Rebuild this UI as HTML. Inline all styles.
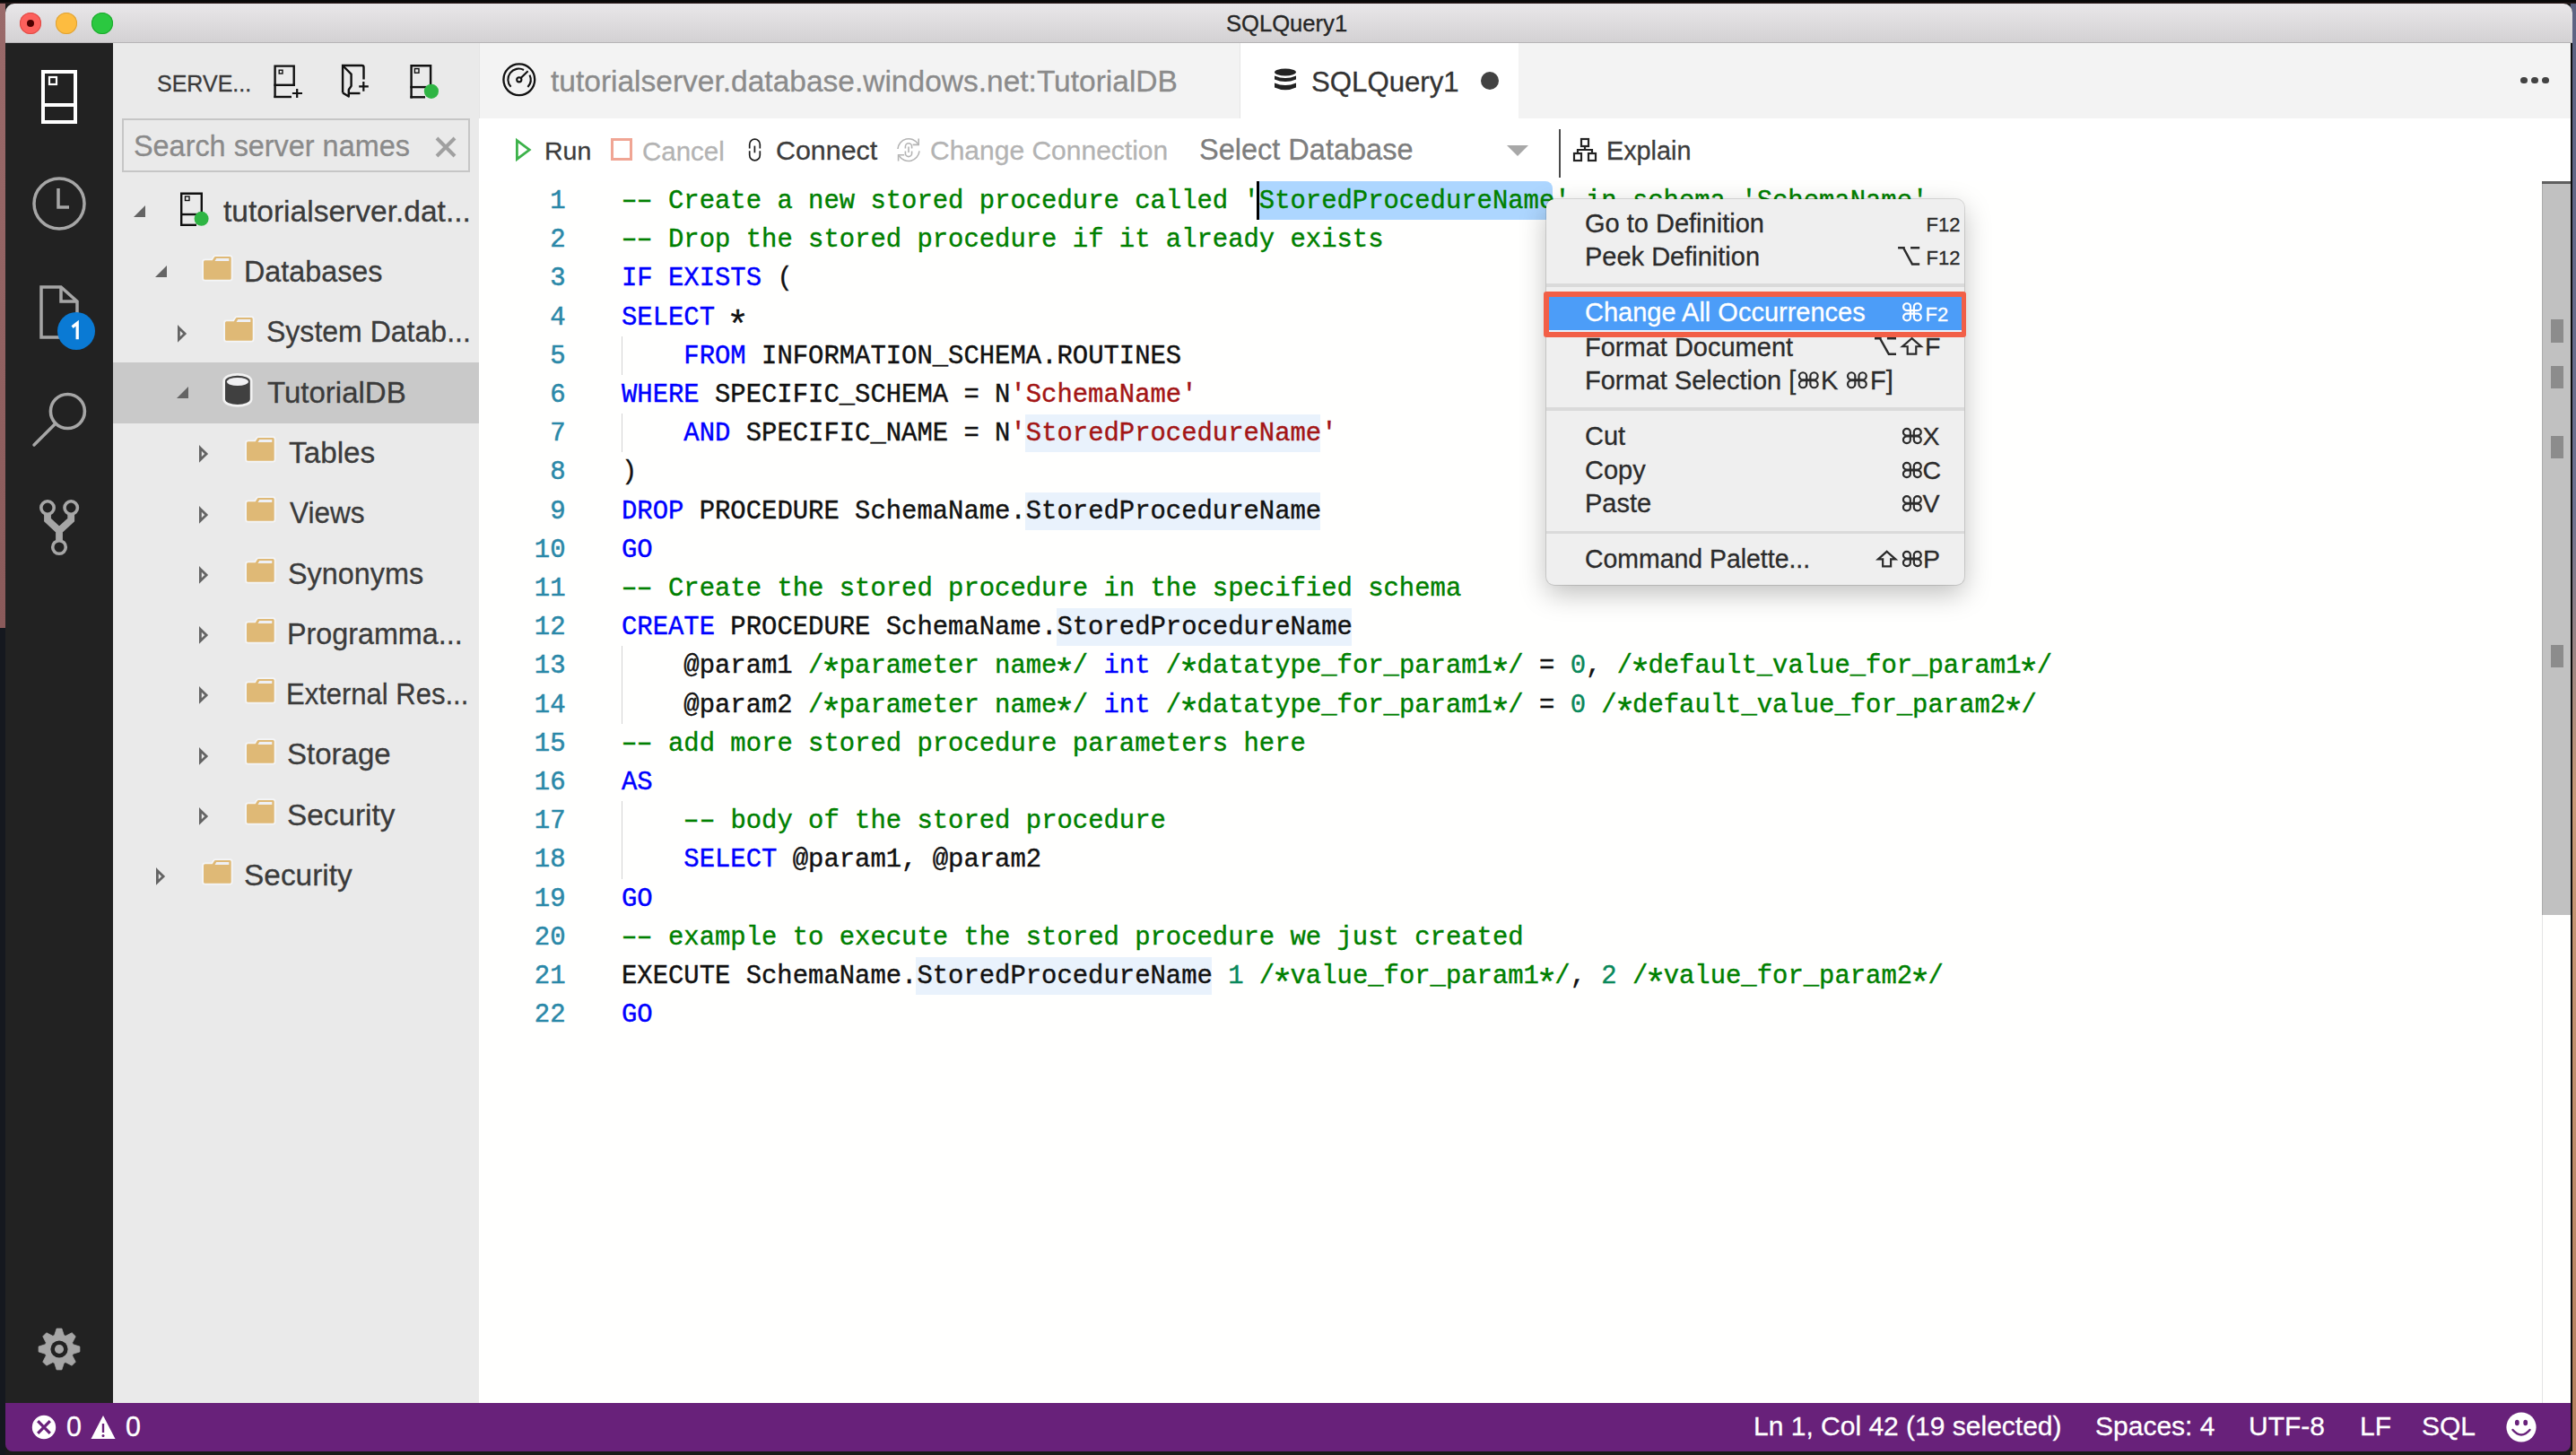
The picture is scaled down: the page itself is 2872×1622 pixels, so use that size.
<!DOCTYPE html>
<html><head><meta charset="utf-8"><title>SQLQuery1</title>
<style>
html,body{margin:0;padding:0;width:2872px;height:1622px;overflow:hidden;background:#1a1a1a}
.r{position:absolute;display:block}
.t{position:absolute;white-space:pre;font-family:"Liberation Sans", sans-serif}
.code{-webkit-text-stroke:0.4px currentColor}
.ln{-webkit-text-stroke:0.5px currentColor}
.ui{-webkit-text-stroke:0.3px currentColor}
.code span{-webkit-text-stroke:0.4px}
.code .hy{display:inline-block;transform:scaleX(1.6)}
.code .ast{display:inline-block;transform:translateY(10.5px) scale(1.45);-webkit-text-stroke:0.2px}
svg.r{overflow:visible}
</style></head><body>
<div class="r" style="left:0px;top:0px;width:2872px;height:1622px;background:#1a1a1a;"></div>
<div class="r" style="left:0px;top:0px;width:6px;height:700px;background:linear-gradient(#9a6a6a,#8a5a5a);"></div>
<div class="r" style="left:0px;top:700px;width:6px;height:922px;background:#15181f;"></div>
<div class="r" style="left:2866px;top:0px;width:6px;height:1622px;background:linear-gradient(#5c6282 0%,#6e7290 35%,#c99a78 55%,#b5805e 100%);"></div>
<div class="r" style="left:0px;top:0px;width:2872px;height:4px;background:linear-gradient(#080808 0%,#080808 55%,#3a2424 100%);"></div>
<div class="r" style="left:6px;top:4px;width:2862px;height:1614px;background:#222;border-radius:10px 10px 8px 8px;overflow:hidden"></div>
<div class="r" style="left:6px;top:4px;width:2862px;height:44px;background:linear-gradient(#e9e7e9,#d3d1d3);border-radius:10px 10px 0 0;box-shadow:inset 0 -1px 0 #b6b4b6"></div>
<div class="r" style="left:22px;top:14px;width:24px;height:24px;border-radius:50%;background:#fc605c;box-shadow:inset 0 0 0 1px #df4b45"></div>
<div class="r" style="left:62px;top:14px;width:24px;height:24px;border-radius:50%;background:#fdbc40;box-shadow:inset 0 0 0 1px #dea236"></div>
<div class="r" style="left:102px;top:14px;width:24px;height:24px;border-radius:50%;background:#2bc840;box-shadow:inset 0 0 0 1px #1ca92c"></div>
<div class="r" style="left:30px;top:22px;width:8px;height:8px;border-radius:50%;background:#4d0000"></div>
<div class="t ui" style="left:1367.00px;top:14.32px;font-size:25.6px;line-height:25.6px;color:#262626;font-family:'Liberation Sans', sans-serif;">SQLQuery1</div>
<div class="r" style="left:6px;top:48px;width:120px;height:1516px;background:#222222;"></div>
<svg class="r" style="left:40px;top:72px" width="52" height="72" viewBox="0 0 52 72"><rect x="8" y="8" width="36" height="56" fill="none" stroke="#fff" stroke-width="4"/><line x1="8" y1="45" x2="44" y2="45" stroke="#fff" stroke-width="4"/><rect x="15" y="14" width="8" height="8" fill="none" stroke="#fff" stroke-width="2.2"/></svg>
<svg class="r" style="left:34px;top:195px" width="64" height="64" viewBox="0 0 64 64"><circle cx="32" cy="32" r="28" fill="none" stroke="#a6a6a6" stroke-width="3.5"/><path d="M31 15 V36 H43" fill="none" stroke="#a6a6a6" stroke-width="3.5"/></svg>
<svg class="r" style="left:40px;top:314px" width="52" height="70" viewBox="0 0 52 70"><path d="M6 6 H28 L46 22 V62 H6 Z" fill="none" stroke="#a6a6a6" stroke-width="3.5"/><path d="M28 6 V22 H46" fill="none" stroke="#a6a6a6" stroke-width="3.5"/></svg>
<div class="r" style="left:64px;top:348px;width:42px;height:42px;border-radius:50%;background:#0a7ad4"></div>
<svg class="r" style="left:70px;top:350px" width="30" height="35" viewBox="70 350 30 35"><path d="M80.6 364.6 L86.2 360.2 V378.3" fill="none" stroke="#fff" stroke-width="3.3" stroke-linejoin="miter"/></svg>
<svg class="r" style="left:30px;top:435px" width="70" height="70" viewBox="0 0 70 70"><circle cx="45.4" cy="23.5" r="19" fill="none" stroke="#a6a6a6" stroke-width="3.6"/><line x1="8" y1="61" x2="32" y2="37" stroke="#a6a6a6" stroke-width="3.5" stroke-linecap="round"/></svg>
<svg class="r" style="left:30px;top:545px" width="70" height="85" viewBox="30 545 70 85"><g fill="none" stroke="#a6a6a6"><circle cx="53" cy="566" r="7.2" stroke-width="3.6"/><circle cx="79.2" cy="566" r="7.2" stroke-width="3.6"/><circle cx="66" cy="610" r="7.3" stroke-width="3.6"/><path d="M53 572.5 V579.6 L66 591.6 L79.2 579.6 V572.5 M66 591 V603" stroke-width="7.8" stroke-linejoin="miter"/></g></svg>
<svg class="r" style="left:34px;top:1472px" width="64" height="64" viewBox="0 0 64 64"><g transform="translate(32,32)"><polygon points="-5.31,-15.41 -2.90,-22.92 2.90,-22.92 5.31,-15.41 7.15,-14.65 14.16,-18.25 18.25,-14.16 14.65,-7.15 15.41,-5.31 22.92,-2.90 22.92,2.90 15.41,5.31 14.65,7.15 18.25,14.16 14.16,18.25 7.15,14.65 5.31,15.41 2.90,22.92 -2.90,22.92 -5.31,15.41 -7.15,14.65 -14.16,18.25 -18.25,14.16 -14.65,7.15 -15.41,5.31 -22.92,2.90 -22.92,-2.90 -15.41,-5.31 -14.65,-7.15 -18.25,-14.16 -14.16,-18.25 -7.15,-14.65" fill="#a6a6a6" stroke="#a6a6a6" stroke-width="0.8" stroke-linejoin="round"/><circle r="9.6" fill="#222"/><circle r="5.05" fill="#a6a6a6"/></g></svg>
<div class="r" style="left:126px;top:48px;width:408px;height:1516px;background:#eaeaea;"></div>
<div class="t ui" style="left:175.00px;top:80.83px;font-size:25px;line-height:25px;color:#3a3a3a;font-family:'Liberation Sans', sans-serif;">SERVE...</div>
<div class="r" style="left:136px;top:132px;width:388px;height:60px;background:#eaeaea;box-shadow:inset 0 0 0 2px #c6c6c6"></div>
<div class="t ui" style="left:149.00px;top:146.57px;font-size:32.4px;line-height:32.4px;color:#8a8a8a;font-family:'Liberation Sans', sans-serif;">Search server names</div>
<svg class="r" style="left:484px;top:151px" width="26" height="26" viewBox="0 0 26 26"><path d="M3 3 L23 23 M23 3 L3 23" stroke="#a0a0a0" stroke-width="4"/></svg>
<div class="r" style="left:126px;top:404px;width:408px;height:68px;background:#c9c9c9;"></div>
<svg class="r" style="left:148px;top:228px" width="16" height="16" viewBox="0 0 16 16"><path d="M14 1 V14 H1 Z" fill="#646464"/></svg>
<svg class="r" style="left:195px;top:208px" width="50" height="50" viewBox="0 0 50 50"><g fill="none" stroke="#111" stroke-width="2.4"><path d="M7.2 42.8 V7.7 H29.8 V31"/><path d="M6 31 H31"/><path d="M6 42.8 H24"/><rect x="11.5" y="11" width="4.5" height="4.5" stroke-width="1.4"/></g><circle cx="29.6" cy="35.8" r="8" fill="#2fb544"/></svg>
<div class="t ui" style="left:249.00px;top:219.73px;font-size:32.8px;line-height:32.8px;color:#3b3b3b;font-family:'Liberation Sans', sans-serif;transform:scaleX(1.0225);transform-origin:0 0">tutorialserver.dat...</div>
<svg class="r" style="left:172px;top:295px" width="16" height="16" viewBox="0 0 16 16"><path d="M14 1 V14 H1 Z" fill="#646464"/></svg>
<svg class="r" style="left:226px;top:285px" width="34" height="30" viewBox="0 0 34 30"><path d="M1 6.8 Q1 5.3 2.5 5.3 H10.8 L12.6 2.2 Q13.2 1 14.5 1 H30.2 Q31.7 1 31.7 2.5 V25.3 Q31.7 26.8 30.2 26.8 H2.5 Q1 26.8 1 25.3 Z" fill="#f4f5f7" stroke="#f4f5f7" stroke-width="3.6" stroke-linejoin="round"/><path d="M1 6.8 Q1 5.3 2.5 5.3 H10.8 L12.6 2.2 Q13.2 1 14.5 1 H30.2 Q31.7 1 31.7 2.5 V25.3 Q31.7 26.8 30.2 26.8 H2.5 Q1 26.8 1 25.3 Z" fill="#dfb976"/><path d="M15.2 3 H29.3 V5.9 H13.6 Z" fill="#eef0f5"/></svg>
<div class="t ui" style="left:272.00px;top:287.03px;font-size:32.8px;line-height:32.8px;color:#3b3b3b;font-family:'Liberation Sans', sans-serif;transform:scaleX(0.985);transform-origin:0 0">Databases</div>
<svg class="r" style="left:198px;top:358px" width="14" height="26" viewBox="0 0 14 26"><path d="M1.4 7.4 L8.1 13.9 L1.4 20.4 Z" fill="none" stroke="#646464" stroke-width="2.8" stroke-linejoin="miter"/></svg>
<svg class="r" style="left:250px;top:353px" width="34" height="30" viewBox="0 0 34 30"><path d="M1 6.8 Q1 5.3 2.5 5.3 H10.8 L12.6 2.2 Q13.2 1 14.5 1 H30.2 Q31.7 1 31.7 2.5 V25.3 Q31.7 26.8 30.2 26.8 H2.5 Q1 26.8 1 25.3 Z" fill="#f4f5f7" stroke="#f4f5f7" stroke-width="3.6" stroke-linejoin="round"/><path d="M1 6.8 Q1 5.3 2.5 5.3 H10.8 L12.6 2.2 Q13.2 1 14.5 1 H30.2 Q31.7 1 31.7 2.5 V25.3 Q31.7 26.8 30.2 26.8 H2.5 Q1 26.8 1 25.3 Z" fill="#dfb976"/><path d="M15.2 3 H29.3 V5.9 H13.6 Z" fill="#eef0f5"/></svg>
<div class="t ui" style="left:297.00px;top:354.33px;font-size:32.8px;line-height:32.8px;color:#3b3b3b;font-family:'Liberation Sans', sans-serif;transform:scaleX(0.9765);transform-origin:0 0">System Datab...</div>
<svg class="r" style="left:196px;top:430px" width="16" height="16" viewBox="0 0 16 16"><path d="M14 1 V14 H1 Z" fill="#646464"/></svg>
<svg class="r" style="left:240px;top:408px" width="50" height="50" viewBox="0 0 50 50"><path d="M11 16.7 A13.9 6 0 0 1 38.8 16.7 V37 A13.9 6 0 0 1 11 37 Z" fill="#f2f2f2" stroke="#f2f2f2" stroke-width="5.4" stroke-linejoin="round"/><path d="M11 16.7 A13.9 6 0 0 1 38.8 16.7 V37 A13.9 6 0 0 1 11 37 Z" fill="#404040"/><ellipse cx="24.9" cy="17.5" rx="12" ry="4.6" fill="#f0f0f2"/></svg>
<div class="t ui" style="left:298.00px;top:421.63px;font-size:32.8px;line-height:32.8px;color:#3b3b3b;font-family:'Liberation Sans', sans-serif;transform:scaleX(1.0066);transform-origin:0 0">TutorialDB</div>
<svg class="r" style="left:222px;top:492px" width="14" height="26" viewBox="0 0 14 26"><path d="M1.4 7.4 L8.1 13.9 L1.4 20.4 Z" fill="none" stroke="#646464" stroke-width="2.8" stroke-linejoin="miter"/></svg>
<svg class="r" style="left:274px;top:487px" width="34" height="30" viewBox="0 0 34 30"><path d="M1 6.8 Q1 5.3 2.5 5.3 H10.8 L12.6 2.2 Q13.2 1 14.5 1 H30.2 Q31.7 1 31.7 2.5 V25.3 Q31.7 26.8 30.2 26.8 H2.5 Q1 26.8 1 25.3 Z" fill="#f4f5f7" stroke="#f4f5f7" stroke-width="3.6" stroke-linejoin="round"/><path d="M1 6.8 Q1 5.3 2.5 5.3 H10.8 L12.6 2.2 Q13.2 1 14.5 1 H30.2 Q31.7 1 31.7 2.5 V25.3 Q31.7 26.8 30.2 26.8 H2.5 Q1 26.8 1 25.3 Z" fill="#dfb976"/><path d="M15.2 3 H29.3 V5.9 H13.6 Z" fill="#eef0f5"/></svg>
<div class="t ui" style="left:321.50px;top:488.93px;font-size:32.8px;line-height:32.8px;color:#3b3b3b;font-family:'Liberation Sans', sans-serif;transform:scaleX(1.015);transform-origin:0 0">Tables</div>
<svg class="r" style="left:222px;top:560px" width="14" height="26" viewBox="0 0 14 26"><path d="M1.4 7.4 L8.1 13.9 L1.4 20.4 Z" fill="none" stroke="#646464" stroke-width="2.8" stroke-linejoin="miter"/></svg>
<svg class="r" style="left:274px;top:554px" width="34" height="30" viewBox="0 0 34 30"><path d="M1 6.8 Q1 5.3 2.5 5.3 H10.8 L12.6 2.2 Q13.2 1 14.5 1 H30.2 Q31.7 1 31.7 2.5 V25.3 Q31.7 26.8 30.2 26.8 H2.5 Q1 26.8 1 25.3 Z" fill="#f4f5f7" stroke="#f4f5f7" stroke-width="3.6" stroke-linejoin="round"/><path d="M1 6.8 Q1 5.3 2.5 5.3 H10.8 L12.6 2.2 Q13.2 1 14.5 1 H30.2 Q31.7 1 31.7 2.5 V25.3 Q31.7 26.8 30.2 26.8 H2.5 Q1 26.8 1 25.3 Z" fill="#dfb976"/><path d="M15.2 3 H29.3 V5.9 H13.6 Z" fill="#eef0f5"/></svg>
<div class="t ui" style="left:322.50px;top:556.23px;font-size:32.8px;line-height:32.8px;color:#3b3b3b;font-family:'Liberation Sans', sans-serif;transform:scaleX(0.962);transform-origin:0 0">Views</div>
<svg class="r" style="left:222px;top:627px" width="14" height="26" viewBox="0 0 14 26"><path d="M1.4 7.4 L8.1 13.9 L1.4 20.4 Z" fill="none" stroke="#646464" stroke-width="2.8" stroke-linejoin="miter"/></svg>
<svg class="r" style="left:274px;top:622px" width="34" height="30" viewBox="0 0 34 30"><path d="M1 6.8 Q1 5.3 2.5 5.3 H10.8 L12.6 2.2 Q13.2 1 14.5 1 H30.2 Q31.7 1 31.7 2.5 V25.3 Q31.7 26.8 30.2 26.8 H2.5 Q1 26.8 1 25.3 Z" fill="#f4f5f7" stroke="#f4f5f7" stroke-width="3.6" stroke-linejoin="round"/><path d="M1 6.8 Q1 5.3 2.5 5.3 H10.8 L12.6 2.2 Q13.2 1 14.5 1 H30.2 Q31.7 1 31.7 2.5 V25.3 Q31.7 26.8 30.2 26.8 H2.5 Q1 26.8 1 25.3 Z" fill="#dfb976"/><path d="M15.2 3 H29.3 V5.9 H13.6 Z" fill="#eef0f5"/></svg>
<div class="t ui" style="left:320.50px;top:623.53px;font-size:32.8px;line-height:32.8px;color:#3b3b3b;font-family:'Liberation Sans', sans-serif;transform:scaleX(0.987);transform-origin:0 0">Synonyms</div>
<svg class="r" style="left:222px;top:694px" width="14" height="26" viewBox="0 0 14 26"><path d="M1.4 7.4 L8.1 13.9 L1.4 20.4 Z" fill="none" stroke="#646464" stroke-width="2.8" stroke-linejoin="miter"/></svg>
<svg class="r" style="left:274px;top:689px" width="34" height="30" viewBox="0 0 34 30"><path d="M1 6.8 Q1 5.3 2.5 5.3 H10.8 L12.6 2.2 Q13.2 1 14.5 1 H30.2 Q31.7 1 31.7 2.5 V25.3 Q31.7 26.8 30.2 26.8 H2.5 Q1 26.8 1 25.3 Z" fill="#f4f5f7" stroke="#f4f5f7" stroke-width="3.6" stroke-linejoin="round"/><path d="M1 6.8 Q1 5.3 2.5 5.3 H10.8 L12.6 2.2 Q13.2 1 14.5 1 H30.2 Q31.7 1 31.7 2.5 V25.3 Q31.7 26.8 30.2 26.8 H2.5 Q1 26.8 1 25.3 Z" fill="#dfb976"/><path d="M15.2 3 H29.3 V5.9 H13.6 Z" fill="#eef0f5"/></svg>
<div class="t ui" style="left:319.50px;top:690.83px;font-size:32.8px;line-height:32.8px;color:#3b3b3b;font-family:'Liberation Sans', sans-serif;transform:scaleX(0.985);transform-origin:0 0">Programma...</div>
<svg class="r" style="left:222px;top:761px" width="14" height="26" viewBox="0 0 14 26"><path d="M1.4 7.4 L8.1 13.9 L1.4 20.4 Z" fill="none" stroke="#646464" stroke-width="2.8" stroke-linejoin="miter"/></svg>
<svg class="r" style="left:274px;top:756px" width="34" height="30" viewBox="0 0 34 30"><path d="M1 6.8 Q1 5.3 2.5 5.3 H10.8 L12.6 2.2 Q13.2 1 14.5 1 H30.2 Q31.7 1 31.7 2.5 V25.3 Q31.7 26.8 30.2 26.8 H2.5 Q1 26.8 1 25.3 Z" fill="#f4f5f7" stroke="#f4f5f7" stroke-width="3.6" stroke-linejoin="round"/><path d="M1 6.8 Q1 5.3 2.5 5.3 H10.8 L12.6 2.2 Q13.2 1 14.5 1 H30.2 Q31.7 1 31.7 2.5 V25.3 Q31.7 26.8 30.2 26.8 H2.5 Q1 26.8 1 25.3 Z" fill="#dfb976"/><path d="M15.2 3 H29.3 V5.9 H13.6 Z" fill="#eef0f5"/></svg>
<div class="t ui" style="left:319.00px;top:758.13px;font-size:32.8px;line-height:32.8px;color:#3b3b3b;font-family:'Liberation Sans', sans-serif;transform:scaleX(0.945);transform-origin:0 0">External Res...</div>
<svg class="r" style="left:222px;top:829px" width="14" height="26" viewBox="0 0 14 26"><path d="M1.4 7.4 L8.1 13.9 L1.4 20.4 Z" fill="none" stroke="#646464" stroke-width="2.8" stroke-linejoin="miter"/></svg>
<svg class="r" style="left:274px;top:824px" width="34" height="30" viewBox="0 0 34 30"><path d="M1 6.8 Q1 5.3 2.5 5.3 H10.8 L12.6 2.2 Q13.2 1 14.5 1 H30.2 Q31.7 1 31.7 2.5 V25.3 Q31.7 26.8 30.2 26.8 H2.5 Q1 26.8 1 25.3 Z" fill="#f4f5f7" stroke="#f4f5f7" stroke-width="3.6" stroke-linejoin="round"/><path d="M1 6.8 Q1 5.3 2.5 5.3 H10.8 L12.6 2.2 Q13.2 1 14.5 1 H30.2 Q31.7 1 31.7 2.5 V25.3 Q31.7 26.8 30.2 26.8 H2.5 Q1 26.8 1 25.3 Z" fill="#dfb976"/><path d="M15.2 3 H29.3 V5.9 H13.6 Z" fill="#eef0f5"/></svg>
<div class="t ui" style="left:320.00px;top:825.43px;font-size:32.8px;line-height:32.8px;color:#3b3b3b;font-family:'Liberation Sans', sans-serif;transform:scaleX(1.007);transform-origin:0 0">Storage</div>
<svg class="r" style="left:222px;top:896px" width="14" height="26" viewBox="0 0 14 26"><path d="M1.4 7.4 L8.1 13.9 L1.4 20.4 Z" fill="none" stroke="#646464" stroke-width="2.8" stroke-linejoin="miter"/></svg>
<svg class="r" style="left:274px;top:891px" width="34" height="30" viewBox="0 0 34 30"><path d="M1 6.8 Q1 5.3 2.5 5.3 H10.8 L12.6 2.2 Q13.2 1 14.5 1 H30.2 Q31.7 1 31.7 2.5 V25.3 Q31.7 26.8 30.2 26.8 H2.5 Q1 26.8 1 25.3 Z" fill="#f4f5f7" stroke="#f4f5f7" stroke-width="3.6" stroke-linejoin="round"/><path d="M1 6.8 Q1 5.3 2.5 5.3 H10.8 L12.6 2.2 Q13.2 1 14.5 1 H30.2 Q31.7 1 31.7 2.5 V25.3 Q31.7 26.8 30.2 26.8 H2.5 Q1 26.8 1 25.3 Z" fill="#dfb976"/><path d="M15.2 3 H29.3 V5.9 H13.6 Z" fill="#eef0f5"/></svg>
<div class="t ui" style="left:320.00px;top:892.73px;font-size:32.8px;line-height:32.8px;color:#3b3b3b;font-family:'Liberation Sans', sans-serif;transform:scaleX(1.016);transform-origin:0 0">Security</div>
<svg class="r" style="left:174px;top:963px" width="14" height="26" viewBox="0 0 14 26"><path d="M1.4 7.4 L8.1 13.9 L1.4 20.4 Z" fill="none" stroke="#646464" stroke-width="2.8" stroke-linejoin="miter"/></svg>
<svg class="r" style="left:226px;top:958px" width="34" height="30" viewBox="0 0 34 30"><path d="M1 6.8 Q1 5.3 2.5 5.3 H10.8 L12.6 2.2 Q13.2 1 14.5 1 H30.2 Q31.7 1 31.7 2.5 V25.3 Q31.7 26.8 30.2 26.8 H2.5 Q1 26.8 1 25.3 Z" fill="#f4f5f7" stroke="#f4f5f7" stroke-width="3.6" stroke-linejoin="round"/><path d="M1 6.8 Q1 5.3 2.5 5.3 H10.8 L12.6 2.2 Q13.2 1 14.5 1 H30.2 Q31.7 1 31.7 2.5 V25.3 Q31.7 26.8 30.2 26.8 H2.5 Q1 26.8 1 25.3 Z" fill="#dfb976"/><path d="M15.2 3 H29.3 V5.9 H13.6 Z" fill="#eef0f5"/></svg>
<div class="t ui" style="left:271.90px;top:960.03px;font-size:32.8px;line-height:32.8px;color:#3b3b3b;font-family:'Liberation Sans', sans-serif;transform:scaleX(1.019);transform-origin:0 0">Security</div>
<svg class="r" style="left:290px;top:60px" width="220" height="60" viewBox="0 0 220 60"><g fill="none" stroke="#111" stroke-width="2.4" stroke-linecap="butt">
<path d="M16.6 49.1 V13.6 H37.7 V35.9"/><path d="M15.4 34.8 H38.9"/><path d="M15.4 48 H35"/>
<rect x="21.2" y="18.2" width="3.8" height="3.8" stroke-width="1.4"/>
<path d="M35.9 44 H47 M41.2 38.9 V49.1" stroke-width="2.2"/>
<path d="M92.1 43.5 V13 H113.5 Q115.5 13 115.5 15 V28.5"/>
<path d="M92.5 13.5 L101.6 22.6 V35.8 L98.8 40 V47.5 L92.1 43.5" stroke-linejoin="round"/>
<path d="M99 44 H111.5"/>
<path d="M110.2 36.4 H120.8 M115.3 31 V41.8" stroke-width="2.2"/>
<path d="M168.6 49.5 V13.2 H190.1 V36"/><path d="M167.4 37.1 H190"/><path d="M167.4 48.3 H184"/>
<rect x="172.4" y="16.6" width="4.6" height="4.6" stroke-width="1.4"/>
</g><circle cx="190.9" cy="41.8" r="8.1" fill="#2fb544"/></svg>
<div class="r" style="left:534px;top:48px;width:2332px;height:84px;background:#f3f3f3;"></div>
<div class="r" style="left:534px;top:48px;width:1px;height:84px;background:#e4e4e4;"></div>
<div class="r" style="left:1383px;top:48px;width:310px;height:84px;background:#ffffff;"></div>
<div class="r" style="left:1382px;top:48px;width:1px;height:84px;background:#e6e6e6;"></div>
<svg class="r" style="left:550px;top:60px" width="60" height="60" viewBox="550 60 60 60"><circle cx="578.8" cy="88.8" r="17.4" fill="none" stroke="#111" stroke-width="2.3"/><path d="M569.6 96.8 A12 12 0 0 1 584 78" fill="none" stroke="#111" stroke-width="2.1"/><path d="M590.5 83.6 A12 12 0 0 1 588.4 97" fill="none" stroke="#111" stroke-width="2.1"/><line x1="578.8" y1="88.8" x2="588.6" y2="79.2" stroke="#111" stroke-width="2.1"/><circle cx="578.8" cy="88.8" r="2.6" fill="#f3f3f3" stroke="#111" stroke-width="2.1"/></svg>
<div class="t ui" style="left:614.00px;top:74.04px;font-size:33.5px;line-height:33.5px;color:#8b8b8b;font-family:'Liberation Sans', sans-serif;">tutorialserver.database.windows.net:TutorialDB</div>
<svg class="r" style="left:1418px;top:75px" width="30" height="30" viewBox="0 0 30 30"><ellipse cx="15" cy="5.5" rx="12" ry="4" fill="#222"/><path d="M3 9.5 Q15 14.5 27 9.5 V13.5 Q15 18.5 3 13.5 Z" fill="#222"/><path d="M3 17.5 Q15 22.5 27 17.5 V22.5 Q15 28 3 22.5 Z" fill="#222"/></svg>
<div class="t ui" style="left:1462.00px;top:75.98px;font-size:31.2px;line-height:31.2px;color:#333;font-family:'Liberation Sans', sans-serif;">SQLQuery1</div>
<div class="r" style="left:1651px;top:80px;width:20px;height:20px;border-radius:50%;background:#424242"></div>
<div class="r" style="left:2810.2px;top:85.8px;width:7.6px;height:7.6px;border-radius:50%;background:#424242"></div>
<div class="r" style="left:2822.2px;top:85.8px;width:7.6px;height:7.6px;border-radius:50%;background:#424242"></div>
<div class="r" style="left:2834.2px;top:85.8px;width:7.6px;height:7.6px;border-radius:50%;background:#424242"></div>
<div class="r" style="left:534px;top:132px;width:2332px;height:70px;background:#ffffff;"></div>
<svg class="r" style="left:565px;top:148px" width="35" height="38" viewBox="565 148 35 38"><path d="M576.4 156.6 L590.2 167 L576.4 177.4 Z" fill="none" stroke="#3cb24a" stroke-width="2.8" stroke-linejoin="miter" stroke-miterlimit="10"/></svg>
<div class="t ui" style="left:607.00px;top:154.17px;font-size:28.5px;line-height:28.5px;color:#3c3c3c;font-family:'Liberation Sans', sans-serif;">Run</div>
<div class="r" style="left:681px;top:154px;width:24px;height:25px;background:transparent;box-shadow:inset 0 0 0 3px #f0a594"></div>
<div class="t ui" style="left:716.00px;top:153.62px;font-size:29.5px;line-height:29.5px;color:#b3b3b3;font-family:'Liberation Sans', sans-serif;">Cancel</div>
<svg class="r" style="left:828px;top:148px" width="28" height="38" viewBox="828 148 28 38"><g fill="none" stroke="#1e1e1e" stroke-width="1.7"><path d="M835.7 165.6 V161 A5.8 5.8 0 0 1 847.3 161 V165.6"/><path d="M835.7 168.2 V173 A5.8 5.8 0 0 0 847.3 173 V168.2"/><path d="M841.4 162.6 V170.3"/></g></svg>
<div class="t ui" style="left:865.00px;top:152.06px;font-size:30.4px;line-height:30.4px;color:#3c3c3c;font-family:'Liberation Sans', sans-serif;">Connect</div>
<svg class="r" style="left:994px;top:148px" width="38" height="38" viewBox="994 148 38 38"><g fill="none" stroke="#b4b4b4" stroke-width="1.6"><path d="M1009.4 165.6 V163.4 A3.6 3.6 0 0 1 1016.6 163.4 V165.6"/><path d="M1009.4 168.4 V171 A3.6 3.6 0 0 0 1016.6 171 V168.4"/><path d="M1013 163.6 V170"/><path d="M1001 166 A12.2 12.2 0 0 1 1023.6 160.6"/><path d="M1025 168.4 A12.2 12.2 0 0 1 1002.4 173.6"/><path d="M1024.2 154.6 V161.4 H1017.6"/><path d="M1001.6 179.6 V172.8 H1008.2"/></g></svg>
<div class="t ui" style="left:1037.00px;top:153.20px;font-size:30px;line-height:30px;color:#b3b3b3;font-family:'Liberation Sans', sans-serif;">Change Connection</div>
<div class="t ui" style="left:1337.00px;top:151.08px;font-size:32.5px;line-height:32.5px;color:#7d7d7d;font-family:'Liberation Sans', sans-serif;">Select Database</div>
<svg class="r" style="left:1678px;top:160px" width="28" height="16" viewBox="0 0 28 16"><path d="M2 2 H26 L14 14 Z" fill="#a8a8a8"/></svg>
<div class="r" style="left:1738px;top:144px;width:2px;height:54px;background:#4a4a4a;"></div>
<svg class="r" style="left:1752px;top:152px" width="30" height="30" viewBox="0 0 30 30"><rect x="11" y="3" width="8" height="8" fill="none" stroke="#222" stroke-width="2.2"/><rect x="3" y="19" width="8" height="8" fill="none" stroke="#222" stroke-width="2.2"/><rect x="19" y="19" width="8" height="8" fill="none" stroke="#222" stroke-width="2.2"/><path d="M15 11 V15 M7 19 V15 H23 V19" fill="none" stroke="#222" stroke-width="2.2"/></svg>
<div class="t ui" style="left:1791.00px;top:153.92px;font-size:28.8px;line-height:28.8px;color:#3c3c3c;font-family:'Liberation Sans', sans-serif;">Explain</div>
<div class="r" style="left:534px;top:202px;width:2332px;height:1362px;background:#fffffe;"></div>
<div class="r" style="left:1143px;top:462px;width:329px;height:42px;background:#e9f2fc;"></div>
<div class="r" style="left:1143px;top:549px;width:329px;height:42px;background:#e9f2fc;"></div>
<div class="r" style="left:1178px;top:678px;width:329px;height:42px;background:#e9f2fc;"></div>
<div class="r" style="left:1021px;top:1067px;width:330px;height:42px;background:#e9f2fc;"></div>
<div class="r" style="left:1403px;top:202px;width:328px;height:43px;background:#add6ff;border-radius:0 8px 8px 0"></div>
<div class="r" style="left:693px;top:375px;width:1px;height:43px;background:#d3d3d3;"></div>
<div class="r" style="left:693px;top:461px;width:1px;height:43px;background:#d3d3d3;"></div>
<div class="r" style="left:693px;top:720px;width:1px;height:44px;background:#d3d3d3;"></div>
<div class="r" style="left:693px;top:764px;width:1px;height:43px;background:#d3d3d3;"></div>
<div class="r" style="left:693px;top:893px;width:1px;height:43px;background:#d3d3d3;"></div>
<div class="r" style="left:693px;top:936px;width:1px;height:44px;background:#d3d3d3;"></div>
<div class="t ln" style="left:613.16px;top:203.00px;font-size:28.9px;line-height:43.2px;color:#2a88a8;font-family:'Liberation Mono', monospace;width:19.34px;">1</div>
<div class="t code" style="left:693.00px;top:203.00px;font-size:28.9px;line-height:43.2px;font-family:'Liberation Mono', monospace;white-space:pre"><span style="color:#008000"><span class="hy">-</span><span class="hy">-</span> Create a new stored procedure called &#x27;StoredProcedureName&#x27; in schema &#x27;SchemaName&#x27;</span></div>
<div class="t ln" style="left:613.16px;top:246.20px;font-size:28.9px;line-height:43.2px;color:#2a88a8;font-family:'Liberation Mono', monospace;width:19.34px;">2</div>
<div class="t code" style="left:693.00px;top:246.20px;font-size:28.9px;line-height:43.2px;font-family:'Liberation Mono', monospace;white-space:pre"><span style="color:#008000"><span class="hy">-</span><span class="hy">-</span> Drop the stored procedure if it already exists</span></div>
<div class="t ln" style="left:613.16px;top:289.40px;font-size:28.9px;line-height:43.2px;color:#2a88a8;font-family:'Liberation Mono', monospace;width:19.34px;">3</div>
<div class="t code" style="left:693.00px;top:289.40px;font-size:28.9px;line-height:43.2px;font-family:'Liberation Mono', monospace;white-space:pre"><span style="color:#0000ff">IF EXISTS</span><span style="color:#111111"> (</span></div>
<div class="t ln" style="left:613.16px;top:332.60px;font-size:28.9px;line-height:43.2px;color:#2a88a8;font-family:'Liberation Mono', monospace;width:19.34px;">4</div>
<div class="t code" style="left:693.00px;top:332.60px;font-size:28.9px;line-height:43.2px;font-family:'Liberation Mono', monospace;white-space:pre"><span style="color:#0000ff">SELECT</span><span style="color:#111111"> <span class="ast">*</span></span></div>
<div class="t ln" style="left:613.16px;top:375.80px;font-size:28.9px;line-height:43.2px;color:#2a88a8;font-family:'Liberation Mono', monospace;width:19.34px;">5</div>
<div class="t code" style="left:693.00px;top:375.80px;font-size:28.9px;line-height:43.2px;font-family:'Liberation Mono', monospace;white-space:pre"><span style="color:#111111">    </span><span style="color:#0000ff">FROM</span><span style="color:#111111"> INFORMATION_SCHEMA.ROUTINES</span></div>
<div class="t ln" style="left:613.16px;top:419.00px;font-size:28.9px;line-height:43.2px;color:#2a88a8;font-family:'Liberation Mono', monospace;width:19.34px;">6</div>
<div class="t code" style="left:693.00px;top:419.00px;font-size:28.9px;line-height:43.2px;font-family:'Liberation Mono', monospace;white-space:pre"><span style="color:#0000ff">WHERE</span><span style="color:#111111"> SPECIFIC_SCHEMA = N</span><span style="color:#a31515">&#x27;SchemaName&#x27;</span></div>
<div class="t ln" style="left:613.16px;top:462.20px;font-size:28.9px;line-height:43.2px;color:#2a88a8;font-family:'Liberation Mono', monospace;width:19.34px;">7</div>
<div class="t code" style="left:693.00px;top:462.20px;font-size:28.9px;line-height:43.2px;font-family:'Liberation Mono', monospace;white-space:pre"><span style="color:#111111">    </span><span style="color:#0000ff">AND</span><span style="color:#111111"> SPECIFIC_NAME = N</span><span style="color:#a31515">&#x27;StoredProcedureName&#x27;</span></div>
<div class="t ln" style="left:613.16px;top:505.40px;font-size:28.9px;line-height:43.2px;color:#2a88a8;font-family:'Liberation Mono', monospace;width:19.34px;">8</div>
<div class="t code" style="left:693.00px;top:505.40px;font-size:28.9px;line-height:43.2px;font-family:'Liberation Mono', monospace;white-space:pre"><span style="color:#111111">)</span></div>
<div class="t ln" style="left:613.16px;top:548.60px;font-size:28.9px;line-height:43.2px;color:#2a88a8;font-family:'Liberation Mono', monospace;width:19.34px;">9</div>
<div class="t code" style="left:693.00px;top:548.60px;font-size:28.9px;line-height:43.2px;font-family:'Liberation Mono', monospace;white-space:pre"><span style="color:#0000ff">DROP</span><span style="color:#111111"> PROCEDURE SchemaName.StoredProcedureName</span></div>
<div class="t ln" style="left:595.82px;top:591.80px;font-size:28.9px;line-height:43.2px;color:#2a88a8;font-family:'Liberation Mono', monospace;width:36.68px;">10</div>
<div class="t code" style="left:693.00px;top:591.80px;font-size:28.9px;line-height:43.2px;font-family:'Liberation Mono', monospace;white-space:pre"><span style="color:#0000ff">GO</span></div>
<div class="t ln" style="left:595.82px;top:635.00px;font-size:28.9px;line-height:43.2px;color:#2a88a8;font-family:'Liberation Mono', monospace;width:36.68px;">11</div>
<div class="t code" style="left:693.00px;top:635.00px;font-size:28.9px;line-height:43.2px;font-family:'Liberation Mono', monospace;white-space:pre"><span style="color:#008000"><span class="hy">-</span><span class="hy">-</span> Create the stored procedure in the specified schema</span></div>
<div class="t ln" style="left:595.82px;top:678.20px;font-size:28.9px;line-height:43.2px;color:#2a88a8;font-family:'Liberation Mono', monospace;width:36.68px;">12</div>
<div class="t code" style="left:693.00px;top:678.20px;font-size:28.9px;line-height:43.2px;font-family:'Liberation Mono', monospace;white-space:pre"><span style="color:#0000ff">CREATE</span><span style="color:#111111"> PROCEDURE SchemaName.StoredProcedureName</span></div>
<div class="t ln" style="left:595.82px;top:721.40px;font-size:28.9px;line-height:43.2px;color:#2a88a8;font-family:'Liberation Mono', monospace;width:36.68px;">13</div>
<div class="t code" style="left:693.00px;top:721.40px;font-size:28.9px;line-height:43.2px;font-family:'Liberation Mono', monospace;white-space:pre"><span style="color:#111111">    @param1 </span><span style="color:#008000">/<span class="ast">*</span>parameter name<span class="ast">*</span>/</span><span style="color:#111111"> </span><span style="color:#0000ff">int</span><span style="color:#111111"> </span><span style="color:#008000">/<span class="ast">*</span>datatype_for_param1<span class="ast">*</span>/</span><span style="color:#111111"> = </span><span style="color:#09885a">0</span><span style="color:#111111">, </span><span style="color:#008000">/<span class="ast">*</span>default_value_for_param1<span class="ast">*</span>/</span></div>
<div class="t ln" style="left:595.82px;top:764.60px;font-size:28.9px;line-height:43.2px;color:#2a88a8;font-family:'Liberation Mono', monospace;width:36.68px;">14</div>
<div class="t code" style="left:693.00px;top:764.60px;font-size:28.9px;line-height:43.2px;font-family:'Liberation Mono', monospace;white-space:pre"><span style="color:#111111">    @param2 </span><span style="color:#008000">/<span class="ast">*</span>parameter name<span class="ast">*</span>/</span><span style="color:#111111"> </span><span style="color:#0000ff">int</span><span style="color:#111111"> </span><span style="color:#008000">/<span class="ast">*</span>datatype_for_param1<span class="ast">*</span>/</span><span style="color:#111111"> = </span><span style="color:#09885a">0</span><span style="color:#111111"> </span><span style="color:#008000">/<span class="ast">*</span>default_value_for_param2<span class="ast">*</span>/</span></div>
<div class="t ln" style="left:595.82px;top:807.80px;font-size:28.9px;line-height:43.2px;color:#2a88a8;font-family:'Liberation Mono', monospace;width:36.68px;">15</div>
<div class="t code" style="left:693.00px;top:807.80px;font-size:28.9px;line-height:43.2px;font-family:'Liberation Mono', monospace;white-space:pre"><span style="color:#008000"><span class="hy">-</span><span class="hy">-</span> add more stored procedure parameters here</span></div>
<div class="t ln" style="left:595.82px;top:851.00px;font-size:28.9px;line-height:43.2px;color:#2a88a8;font-family:'Liberation Mono', monospace;width:36.68px;">16</div>
<div class="t code" style="left:693.00px;top:851.00px;font-size:28.9px;line-height:43.2px;font-family:'Liberation Mono', monospace;white-space:pre"><span style="color:#0000ff">AS</span></div>
<div class="t ln" style="left:595.82px;top:894.20px;font-size:28.9px;line-height:43.2px;color:#2a88a8;font-family:'Liberation Mono', monospace;width:36.68px;">17</div>
<div class="t code" style="left:693.00px;top:894.20px;font-size:28.9px;line-height:43.2px;font-family:'Liberation Mono', monospace;white-space:pre"><span style="color:#111111">    </span><span style="color:#008000"><span class="hy">-</span><span class="hy">-</span> body of the stored procedure</span></div>
<div class="t ln" style="left:595.82px;top:937.40px;font-size:28.9px;line-height:43.2px;color:#2a88a8;font-family:'Liberation Mono', monospace;width:36.68px;">18</div>
<div class="t code" style="left:693.00px;top:937.40px;font-size:28.9px;line-height:43.2px;font-family:'Liberation Mono', monospace;white-space:pre"><span style="color:#111111">    </span><span style="color:#0000ff">SELECT</span><span style="color:#111111"> @param1, @param2</span></div>
<div class="t ln" style="left:595.82px;top:980.60px;font-size:28.9px;line-height:43.2px;color:#2a88a8;font-family:'Liberation Mono', monospace;width:36.68px;">19</div>
<div class="t code" style="left:693.00px;top:980.60px;font-size:28.9px;line-height:43.2px;font-family:'Liberation Mono', monospace;white-space:pre"><span style="color:#0000ff">GO</span></div>
<div class="t ln" style="left:595.82px;top:1023.80px;font-size:28.9px;line-height:43.2px;color:#2a88a8;font-family:'Liberation Mono', monospace;width:36.68px;">20</div>
<div class="t code" style="left:693.00px;top:1023.80px;font-size:28.9px;line-height:43.2px;font-family:'Liberation Mono', monospace;white-space:pre"><span style="color:#008000"><span class="hy">-</span><span class="hy">-</span> example to execute the stored procedure we just created</span></div>
<div class="t ln" style="left:595.82px;top:1067.00px;font-size:28.9px;line-height:43.2px;color:#2a88a8;font-family:'Liberation Mono', monospace;width:36.68px;">21</div>
<div class="t code" style="left:693.00px;top:1067.00px;font-size:28.9px;line-height:43.2px;font-family:'Liberation Mono', monospace;white-space:pre"><span style="color:#111111">EXECUTE SchemaName.StoredProcedureName </span><span style="color:#09885a">1</span><span style="color:#111111"> </span><span style="color:#008000">/<span class="ast">*</span>value_for_param1<span class="ast">*</span>/</span><span style="color:#111111">, </span><span style="color:#09885a">2</span><span style="color:#111111"> </span><span style="color:#008000">/<span class="ast">*</span>value_for_param2<span class="ast">*</span>/</span></div>
<div class="t ln" style="left:595.82px;top:1110.20px;font-size:28.9px;line-height:43.2px;color:#2a88a8;font-family:'Liberation Mono', monospace;width:36.68px;">22</div>
<div class="t code" style="left:693.00px;top:1110.20px;font-size:28.9px;line-height:43.2px;font-family:'Liberation Mono', monospace;white-space:pre"><span style="color:#0000ff">GO</span></div>
<div class="r" style="left:1401px;top:202px;width:3px;height:43px;background:#000;"></div>
<div class="r" style="left:2834px;top:202px;width:32px;height:818px;background:#c1c1c1;box-shadow:inset 1px 0 0 #ababab"></div>
<div class="r" style="left:2834px;top:202px;width:32px;height:3px;background:#5f5f5f;"></div>
<div class="r" style="left:2844px;top:356px;width:14px;height:26px;background:#8c8c8c;"></div>
<div class="r" style="left:2844px;top:408px;width:14px;height:25px;background:#8c8c8c;"></div>
<div class="r" style="left:2844px;top:486px;width:14px;height:25px;background:#8c8c8c;"></div>
<div class="r" style="left:2844px;top:719px;width:14px;height:25px;background:#8c8c8c;"></div>
<div class="r" style="left:2834px;top:1020px;width:1px;height:544px;background:#e4e4e4;"></div>
<div class="r" style="left:2866px;top:48px;width:2px;height:1570px;background:#0c0c0c;"></div>
<div class="r" style="left:1724px;top:222px;width:466px;height:430px;background:#efefef;border-radius:9px;box-shadow:0 0 0 1px rgba(0,0,0,0.12),0 10px 30px rgba(0,0,0,0.25)"></div>
<div class="r" style="left:1724px;top:316px;width:466px;height:4px;background:#dadada;"></div>
<div class="r" style="left:1724px;top:454px;width:466px;height:4px;background:#dadada;"></div>
<div class="r" style="left:1724px;top:592px;width:466px;height:3px;background:#dadada;"></div>
<div class="r" style="left:1721px;top:325px;width:471px;height:51px;background:#f25f47;border-radius:3px"></div>
<div class="r" style="left:1727px;top:331px;width:460px;height:37px;background:#4c9df8;"></div>
<div class="r" style="left:1727px;top:368px;width:460px;height:2px;background:#e9f1fb;"></div>
<div class="t ui" style="left:1767.00px;top:235.25px;font-size:29px;line-height:29px;color:#2b2b2b;font-family:'Liberation Sans', sans-serif;">Go to Definition</div>
<div class="t ui" style="left:1767.00px;top:272.25px;font-size:29px;line-height:29px;color:#2b2b2b;font-family:'Liberation Sans', sans-serif;">Peek Definition</div>
<div class="t ui" style="left:1767.00px;top:334.25px;font-size:29px;line-height:29px;color:#ffffff;font-family:'Liberation Sans', sans-serif;">Change All Occurrences</div>
<div class="t ui" style="left:1767.00px;top:372.85px;font-size:29px;line-height:29px;color:#2b2b2b;font-family:'Liberation Sans', sans-serif;">Format Document</div>
<div class="t ui" style="left:1767.00px;top:410.25px;font-size:29px;line-height:29px;color:#2b2b2b;font-family:'Liberation Sans', sans-serif;">Format Selection [</div>
<div class="t ui" style="left:2030.00px;top:410.25px;font-size:29px;line-height:29px;color:#2b2b2b;font-family:'Liberation Sans', sans-serif;">K</div>
<div class="t ui" style="left:2085.00px;top:410.25px;font-size:29px;line-height:29px;color:#2b2b2b;font-family:'Liberation Sans', sans-serif;">F]</div>
<div class="t ui" style="left:1767.00px;top:472.25px;font-size:29px;line-height:29px;color:#2b2b2b;font-family:'Liberation Sans', sans-serif;">Cut</div>
<div class="t ui" style="left:1767.00px;top:510.25px;font-size:29px;line-height:29px;color:#2b2b2b;font-family:'Liberation Sans', sans-serif;">Copy</div>
<div class="t ui" style="left:1767.00px;top:547.25px;font-size:29px;line-height:29px;color:#2b2b2b;font-family:'Liberation Sans', sans-serif;">Paste</div>
<div class="t ui" style="left:1767.00px;top:609.25px;font-size:29px;line-height:29px;color:#2b2b2b;font-family:'Liberation Sans', sans-serif;transform:scaleX(0.98);transform-origin:0 0">Command Palette...</div>
<div class="t ui" style="left:2147.50px;top:239.77px;font-size:22px;line-height:22px;color:#2b2b2b;font-family:'Liberation Sans', sans-serif;">F12</div>
<div class="t ui" style="left:2147.50px;top:277.37px;font-size:22px;line-height:22px;color:#2b2b2b;font-family:'Liberation Sans', sans-serif;">F12</div>
<div class="t ui" style="left:2146.50px;top:340.37px;font-size:22px;line-height:22px;color:#ffffff;font-family:'Liberation Sans', sans-serif;">F2</div>
<div class="t ui" style="left:2146.00px;top:372.47px;font-size:28.5px;line-height:28.5px;color:#2b2b2b;font-family:'Liberation Sans', sans-serif;">F</div>
<div class="t ui" style="left:2143.50px;top:471.87px;font-size:28.5px;line-height:28.5px;color:#2b2b2b;font-family:'Liberation Sans', sans-serif;">X</div>
<div class="t ui" style="left:2143.50px;top:509.87px;font-size:28.5px;line-height:28.5px;color:#2b2b2b;font-family:'Liberation Sans', sans-serif;">C</div>
<div class="t ui" style="left:2143.50px;top:547.07px;font-size:28.5px;line-height:28.5px;color:#2b2b2b;font-family:'Liberation Sans', sans-serif;">V</div>
<div class="t ui" style="left:2144.00px;top:608.87px;font-size:28.5px;line-height:28.5px;color:#2b2b2b;font-family:'Liberation Sans', sans-serif;">P</div>
<svg class="r" style="left:1724px;top:222px" width="466" height="430" viewBox="1724 222 466 430"><path d="M2116.10 276.25 H2123.81 M2122.12 276.25 L2132.01 294.55 H2140.20 M2130.08 276.25 H2140.20" fill="none" stroke="#2b2b2b" stroke-width="2.5" stroke-linejoin="miter"/><path d="M2129.74 345.84 H2134.16 V349.76 H2129.74 Z M2129.74 345.84 V341.42 A4.42 4.42 0 1 0 2125.32 345.84 Z M2134.16 345.84 V341.42 A4.42 4.42 0 1 1 2138.58 345.84 Z M2129.74 349.76 H2125.32 A4.42 4.42 0 1 0 2129.74 354.18 Z M2134.16 349.76 H2138.58 A4.42 4.42 0 1 1 2134.16 354.18 Z" fill="none" stroke="#ffffff" stroke-width="2.5" stroke-linejoin="round" transform="translate(2131.95 347.80) scale(0.8869 0.8843) translate(-2131.95 -347.80)"/><path d="M2090.00 377.25 H2097.68 M2096.00 377.25 L2105.84 394.75 H2114.00 M2103.92 377.25 H2114.00" fill="none" stroke="#2b2b2b" stroke-width="2.5" stroke-linejoin="miter"/><polygon points="2131.50,377.10 2141.90,386.25 2136.28,386.25 2136.28,394.70 2126.72,394.70 2126.72,386.25 2121.10,386.25" fill="none" stroke="#2b2b2b" stroke-width="2.2" stroke-linejoin="miter"/><path d="M2013.98 423.28 H2018.62 V424.22 H2013.98 Z M2013.98 423.28 V418.64 A4.64 4.64 0 1 0 2009.34 423.28 Z M2018.62 423.28 V418.64 A4.64 4.64 0 1 1 2023.26 423.28 Z M2013.98 424.22 H2009.34 A4.64 4.64 0 1 0 2013.98 428.86 Z M2018.62 424.22 H2023.26 A4.64 4.64 0 1 1 2018.62 428.86 Z" fill="none" stroke="#2b2b2b" stroke-width="2.5" stroke-linejoin="round" transform="translate(2016.30 423.75) scale(0.8922 0.8718) translate(-2016.30 -423.75)"/><path d="M2068.08 423.28 H2072.72 V424.22 H2068.08 Z M2068.08 423.28 V418.64 A4.64 4.64 0 1 0 2063.44 423.28 Z M2072.72 423.28 V418.64 A4.64 4.64 0 1 1 2077.36 423.28 Z M2068.08 424.22 H2063.44 A4.64 4.64 0 1 0 2068.08 428.86 Z M2072.72 424.22 H2077.36 A4.64 4.64 0 1 1 2072.72 428.86 Z" fill="none" stroke="#2b2b2b" stroke-width="2.5" stroke-linejoin="round" transform="translate(2070.40 423.75) scale(0.8922 0.8718) translate(-2070.40 -423.75)"/><path d="M2129.62 485.52 H2134.08 V486.48 H2129.62 Z M2129.62 485.52 V481.06 A4.46 4.46 0 1 0 2125.16 485.52 Z M2134.08 485.52 V481.06 A4.46 4.46 0 1 1 2138.54 485.52 Z M2129.62 486.48 H2125.16 A4.46 4.46 0 1 0 2129.62 490.94 Z M2134.08 486.48 H2138.54 A4.46 4.46 0 1 1 2134.08 490.94 Z" fill="none" stroke="#2b2b2b" stroke-width="2.5" stroke-linejoin="round" transform="translate(2131.85 486.00) scale(0.8879 0.8670) translate(-2131.85 -486.00)"/><path d="M2129.62 523.62 H2134.08 V524.48 H2129.62 Z M2129.62 523.62 V519.16 A4.46 4.46 0 1 0 2125.16 523.62 Z M2134.08 523.62 V519.16 A4.46 4.46 0 1 1 2138.54 523.62 Z M2129.62 524.48 H2125.16 A4.46 4.46 0 1 0 2129.62 528.94 Z M2134.08 524.48 H2138.54 A4.46 4.46 0 1 1 2134.08 528.94 Z" fill="none" stroke="#2b2b2b" stroke-width="2.5" stroke-linejoin="round" transform="translate(2131.85 524.05) scale(0.8879 0.8663) translate(-2131.85 -524.05)"/><path d="M2129.62 560.72 H2134.08 V561.68 H2129.62 Z M2129.62 560.72 V556.26 A4.46 4.46 0 1 0 2125.16 560.72 Z M2134.08 560.72 V556.26 A4.46 4.46 0 1 1 2138.54 560.72 Z M2129.62 561.68 H2125.16 A4.46 4.46 0 1 0 2129.62 566.14 Z M2134.08 561.68 H2138.54 A4.46 4.46 0 1 1 2134.08 566.14 Z" fill="none" stroke="#2b2b2b" stroke-width="2.5" stroke-linejoin="round" transform="translate(2131.85 561.20) scale(0.8879 0.8670) translate(-2131.85 -561.20)"/><polygon points="2103.65,614.80 2113.40,623.38 2108.14,623.38 2108.14,631.30 2099.16,631.30 2099.16,623.38 2093.90,623.38" fill="none" stroke="#2b2b2b" stroke-width="2.2" stroke-linejoin="miter"/><path d="M2129.62 622.62 H2134.08 V623.48 H2129.62 Z M2129.62 622.62 V618.16 A4.46 4.46 0 1 0 2125.16 622.62 Z M2134.08 622.62 V618.16 A4.46 4.46 0 1 1 2138.54 622.62 Z M2129.62 623.48 H2125.16 A4.46 4.46 0 1 0 2129.62 627.94 Z M2134.08 623.48 H2138.54 A4.46 4.46 0 1 1 2134.08 627.94 Z" fill="none" stroke="#2b2b2b" stroke-width="2.5" stroke-linejoin="round" transform="translate(2131.85 623.05) scale(0.8879 0.8663) translate(-2131.85 -623.05)"/></svg>
<div class="r" style="left:6px;top:1564px;width:2860px;height:54px;background:#68217a;border-radius:0 0 8px 8px"></div>
<svg class="r" style="left:34px;top:1576px" width="30" height="30" viewBox="0 0 30 30"><circle cx="15" cy="15" r="13.2" fill="#fff"/><path d="M8.2 8.2 L21.8 21.8 M21.8 8.2 L8.2 21.8" stroke="#68217a" stroke-width="3.2"/></svg>
<div class="t ui" style="left:74.00px;top:1575.18px;font-size:30.5px;line-height:30.5px;color:#fff;font-family:'Liberation Sans', sans-serif;">0</div>
<svg class="r" style="left:100px;top:1576px" width="30" height="30" viewBox="0 0 30 30"><path d="M15 2 L28.5 28 H1.5 Z" fill="#fff"/><path d="M15 11 V21" stroke="#68217a" stroke-width="2.4"/><circle cx="15" cy="24.5" r="1.5" fill="#68217a"/></svg>
<div class="t ui" style="left:140.00px;top:1575.18px;font-size:30.5px;line-height:30.5px;color:#fff;font-family:'Liberation Sans', sans-serif;">0</div>
<div class="t ui" style="left:1955.00px;top:1574.60px;font-size:30px;line-height:30px;color:#fff;font-family:'Liberation Sans', sans-serif;">Ln 1, Col 42 (19 selected)</div>
<div class="t ui" style="left:2336.00px;top:1574.60px;font-size:30px;line-height:30px;color:#fff;font-family:'Liberation Sans', sans-serif;">Spaces: 4</div>
<div class="t ui" style="left:2507.00px;top:1574.60px;font-size:30px;line-height:30px;color:#fff;font-family:'Liberation Sans', sans-serif;">UTF-8</div>
<div class="t ui" style="left:2631.00px;top:1574.60px;font-size:30px;line-height:30px;color:#fff;font-family:'Liberation Sans', sans-serif;">LF</div>
<div class="t ui" style="left:2700.00px;top:1574.60px;font-size:30px;line-height:30px;color:#fff;font-family:'Liberation Sans', sans-serif;">SQL</div>
<svg class="r" style="left:2793px;top:1573px" width="36" height="36" viewBox="0 0 36 36"><circle cx="18" cy="18" r="16.6" fill="#fff"/><ellipse cx="13.3" cy="13" rx="2.4" ry="3.2" fill="#68217a"/><ellipse cx="22.7" cy="13" rx="2.4" ry="3.2" fill="#68217a"/><path d="M8.5 21 Q18 32 27.5 21" fill="none" stroke="#68217a" stroke-width="2.4" stroke-linecap="round"/></svg>
</body></html>
